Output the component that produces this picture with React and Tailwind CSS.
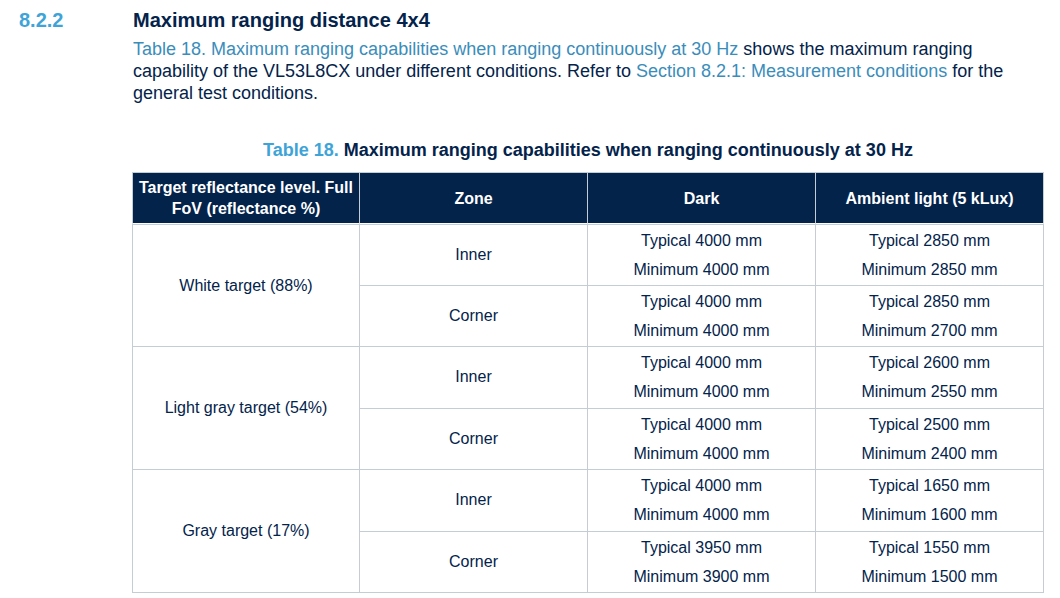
import React from 'react';

const groups = [
  {
    label: 'White target (88%)',
    zones: [
      { zone: 'Inner', dark: ['4000', '4000'], amb: ['2850', '2850'] },
      { zone: 'Corner', dark: ['4000', '4000'], amb: ['2850', '2700'] },
    ],
  },
  {
    label: 'Light gray target (54%)',
    zones: [
      { zone: 'Inner', dark: ['4000', '4000'], amb: ['2600', '2550'] },
      { zone: 'Corner', dark: ['4000', '4000'], amb: ['2500', '2400'] },
    ],
  },
  {
    label: 'Gray target (17%)',
    zones: [
      { zone: 'Inner', dark: ['4000', '4000'], amb: ['1650', '1600'] },
      { zone: 'Corner', dark: ['3950', '3900'], amb: ['1550', '1500'] },
    ],
  },
];

const Pair = ({ vals }) => (
  <div className="flex flex-col items-center leading-[29px]">
    <span>Typical {vals[0]} mm</span>
    <span>Minimum {vals[1]} mm</span>
  </div>
);

const App = () => (
  <div className="w-[1060px] h-[598px] bg-white text-[#03234b] font-['Liberation_Sans',Arial,sans-serif] pt-[8px] overflow-hidden">
    {/* Section heading */}
    <div className="flex items-baseline">
      <span className="w-[133px] pl-[19px] text-[20px] font-bold text-[#3ea4d8] leading-[24px]">8.2.2</span>
      <h2 className="text-[20px] font-bold leading-[24px]">Maximum ranging distance 4x4</h2>
    </div>

    <p className="ml-[133px] w-[911px] mt-[6px] text-[18px] leading-[22px]">
      <span className="text-[#3a8dbb]">Table 18. Maximum ranging capabilities when ranging continuously at 30 Hz</span>{' '}
      shows the maximum ranging capability of the VL53L8CX under different conditions. Refer to{' '}
      <span className="text-[#3a8dbb]">Section 8.2.1: Measurement conditions</span> for the general test conditions.
    </p>

    <div className="ml-[132px] w-[912px] mt-[35px] text-center text-[18px] font-bold leading-[22px]">
      <span className="text-[#3ea4d8]">Table 18.</span> Maximum ranging capabilities when ranging continuously at 30 Hz
    </div>

    <table className="ml-[132px] mt-[11px] w-[912px] table-fixed border-separate border-spacing-0 text-[16px] text-center">
      <colgroup>
        <col className="w-[228px]" />
        <col className="w-[228px]" />
        <col className="w-[228px]" />
        <col className="w-[228px]" />
      </colgroup>
      <thead>
        <tr className="bg-[#03234b] text-white font-bold leading-[21px]">
          <th className="h-[52px] border-t border-l border-b border-r border-t-[#c4ccd4] border-l-[#c4ccd4] border-b-white border-r-[#c4ccd4] px-[3px]">
            Target reflectance level. Full FoV (reflectance %)
          </th>
          <th className="border-t border-b border-r border-t-[#c4ccd4] border-b-white border-r-[#c4ccd4]">Zone</th>
          <th className="border-t border-b border-r border-t-[#c4ccd4] border-b-white border-r-[#c4ccd4]">Dark</th>
          <th className="border-t border-b border-r border-t-[#c4ccd4] border-b-white border-r-[#c4ccd4]">Ambient light (5 kLux)</th>
        </tr>
      </thead>
      <tbody>
        {groups.map((g, gi) =>
          g.zones.map((z, zi) => {
            const top = gi === 0 && zi === 0 ? 'border-t border-t-[#c4ccd4]' : '';
            return (
              <tr key={`${gi}-${zi}`}>
                {zi === 0 && (
                  <td
                    rowSpan={2}
                    className={`border-l border-r border-b border-[#c4ccd4] align-middle ${top}`}
                  >
                    {g.label}
                  </td>
                )}
                <td className={`h-[61.5px] border-r border-b border-[#c4ccd4] align-middle ${top}`}>{z.zone}</td>
                <td className={`border-r border-b border-[#c4ccd4] align-middle ${top}`}>
                  <Pair vals={z.dark} />
                </td>
                <td className={`border-r border-b border-[#c4ccd4] align-middle ${top}`}>
                  <Pair vals={z.amb} />
                </td>
              </tr>
            );
          })
        )}
      </tbody>
    </table>
  </div>
);

export default App;
